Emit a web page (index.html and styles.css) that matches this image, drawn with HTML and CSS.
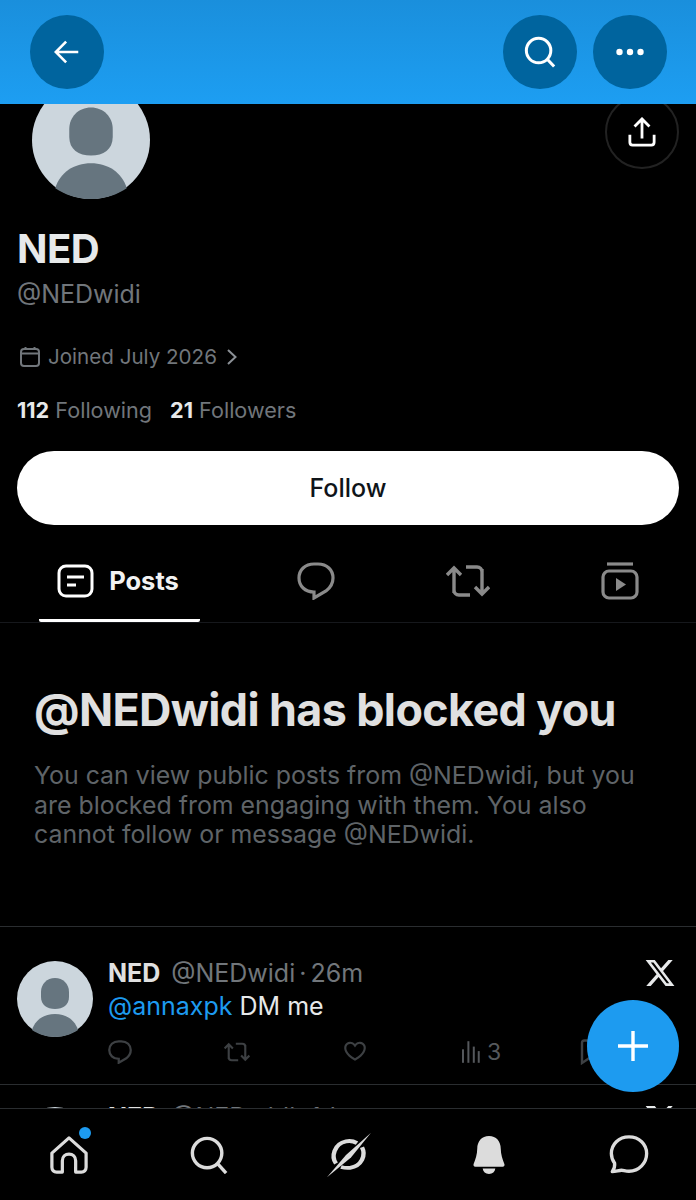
FILE: index.html
```html
<!DOCTYPE html>
<html lang="en">
<head>
  <meta charset="UTF-8" />
  <title>NED (@NEDwidi)</title>
  <link rel="stylesheet" href="styles.css">
</head>
<body>
  <div class="screen">

    <header class="topbar">
      <button class="round-btn">
        <svg width="26" height="26" viewBox="0 0 30 30" fill="none" stroke="#fff" stroke-width="3"><path d="M2 15h26M14 3 2 15l12 12"/></svg>
      </button>
      <div class="topbar-right">
        <button class="round-btn">
          <svg width="32" height="32" viewBox="0 0 34 34" fill="none" stroke="#fff" stroke-width="3.200"><circle cx="15.500" cy="15.500" r="13"/><path d="m24.500 24.500 7.500 8"/></svg>
        </button>
        <button class="round-btn">
          <svg width="28" height="8" viewBox="0 0 28 8" fill="#fff"><circle cx="3.500" cy="4" r="3.200"/><circle cx="14" cy="4" r="3.200"/><circle cx="24.500" cy="4" r="3.200"/></svg>
        </button>
      </div>
    </header>

    <main class="content">
      <section class="profile">
        <div class="profile-top">
          <svg class="avatar avatar-big" viewBox="0 0 76 76"><use href="#default-avatar"/></svg>
          <button class="share-btn">
            <svg width="28" height="30" viewBox="0 0 30 32" fill="none" stroke="#fff" stroke-width="3"><path d="M15 23V3M7 10l8-8 8 8M2 19v8c0 2 1 3 3 3h20c2 0 3-1 3-3v-8"/></svg>
          </button>
        </div>
        <h1 class="name">NED</h1>
        <div class="handle">@NEDwidi</div>
        <div class="joined">
          <svg width="22" height="22" viewBox="0 0 22 22" fill="none" stroke="#71767b" stroke-width="2"><rect x="2" y="3" width="18" height="17" rx="3"/><path d="M2 7.500h18M6.500 1v3M15.500 1v3"/></svg>
          <span>Joined July 2026</span>
          <svg width="12" height="18" viewBox="0 0 12 18" fill="none" stroke="#8b9096" stroke-width="2"><path d="m2 2 7.500 7L2 16"/></svg>
        </div>
        <div class="stats">
          <span><b>112</b> Following</span>
          <span><b>21</b> Followers</span>
        </div>
        <button class="follow-btn">Follow</button>
      </section>

      <nav class="tabs">
        <div class="tab tab-active">
          <svg width="37" height="34" viewBox="0 0 37 34" fill="none" stroke="#fff" stroke-width="3"><rect x="2" y="2" width="33" height="30" rx="7"/><path d="M10 13h17M10 21h9"/></svg>
          <span>Posts</span>
        </div>
        <div class="tab">
          <svg width="38" height="38" viewBox="0 0 38 38" fill="none" stroke="#8a8a8a" stroke-width="3.200"><path d="M17 2h4c9 0 15 6 15 14 0 6-3 10-7 13l-12 7v-6C8 30 2 24 2 16S8 2 17 2Z"/></svg>
        </div>
        <div class="tab">
          <svg width="44" height="36" viewBox="0 0 44 36" fill="none" stroke="#8a8a8a" stroke-width="3.400"><path d="M8 30V5M1 12l7-7 7 7M36 6v25M29 24l7 7 7-7M20 4h11c3 0 5 2 5 5M24 32H13c-3 0-5-2-5-5"/></svg>
        </div>
        <div class="tab">
          <svg width="38" height="38" viewBox="0 0 38 38" fill="none" stroke="#8a8a8a" stroke-width="3.200"><rect x="2" y="9" width="34" height="27" rx="6"/><path d="M6 2h26"/><path d="M15 16v13l10-6.500Z" fill="#8a8a8a" stroke="none"/></svg>
        </div>
      </nav>

      <section class="blocked">
        <h2>@NEDwidi has blocked you</h2>
        <p>You can view public posts from @NEDwidi, but you are blocked from engaging with them. You also cannot follow or message @NEDwidi.</p>
      </section>

      <article class="post">
        <svg class="avatar avatar-small" viewBox="0 0 76 76"><use href="#default-avatar"/></svg>
        <div class="post-body">
          <div class="post-head"><b>NED</b><span class="post-handle">@NEDwidi</span><span class="post-dot">·</span><span>26m</span></div>
          <div class="post-text"><a>@annaxpk</a> DM me</div>
          <div class="post-actions">
            <svg width="24" height="24" viewBox="0 0 38 38" fill="none" stroke="#3d4043" stroke-width="3.600"><path d="M17 2h4c9 0 15 6 15 14 0 6-3 10-7 13l-12 7v-6C8 30 2 24 2 16S8 2 17 2Z"/></svg>
            <svg width="26" height="22" viewBox="0 0 44 36" fill="none" stroke="#3d4043" stroke-width="3.600"><path d="M8 30V5M1 12l7-7 7 7M36 6v25M29 24l7 7 7-7M20 4h11c3 0 5 2 5 5M24 32H13c-3 0-5-2-5-5"/></svg>
            <svg width="26" height="24" viewBox="0 0 24 22" fill="#3d4043"><path d="M16.700 3.500c-1.200-.060-2.700.510-3.900 2.160l-.800 1.090-.800-1.090C10 4 8.500 3.440 7.300 3.500 6 3.570 4.900 4.280 4.400 5.410c-.550 1.120-.630 2.780.470 4.820 1.080 1.970 3.260 4.270 7.130 6.610 3.870-2.340 6.050-4.640 7.130-6.610 1.100-2.040 1.030-3.700.470-4.820-.560-1.130-1.660-1.840-2.900-1.910zm4.180 7.690c-1.350 2.480-4 5.120-8.380 7.670l-.500.300-.500-.300c-4.380-2.550-7.030-5.190-8.380-7.670-1.360-2.500-1.410-4.860-.510-6.670C3.500 2.730 5.250 1.610 7.200 1.510c1.650-.090 3.370.560 4.800 2.010 1.430-1.450 3.150-2.100 4.800-2.010 1.950.100 3.710 1.220 4.600 3.010.900 1.810.850 4.170-.520 6.670z"/></svg>
            <div class="views">
              <svg width="18" height="24" viewBox="0 0 20 24" fill="#55585c"><rect x="0" y="9" width="2.200" height="15"/><rect x="6" y="0" width="2.200" height="24"/><rect x="12" y="6" width="2.200" height="18"/><rect x="17.500" y="11" width="2.200" height="13"/></svg>
              <span>3</span>
            </div>
            <svg width="24" height="26" viewBox="0 0 24 26" fill="none" stroke="#3d4043" stroke-width="2.400"><path d="M3 24V4c0-1.500 1-2.500 2.500-2.500h13C20 1.500 21 2.500 21 4v20l-9-6Z"/></svg>
          </div>
        </div>
        <svg class="x-logo" width="32" height="32" viewBox="0 0 24 24" fill="#e7e9ea"><path d="M18.244 2.250h3.308l-7.227 8.260 8.502 11.240H16.170l-5.214-6.817L4.990 21.750H1.680l7.730-8.835L1.254 2.250H8.080l4.713 6.231zm-1.161 17.520h1.833L7.084 4.126H5.117z"/></svg>
      </article>

      <article class="post post-next">
        <svg class="avatar avatar-small" viewBox="0 0 76 76"><use href="#default-avatar"/></svg>
        <div class="post-body">
          <div class="post-head"><b>NED</b><span class="post-handle">@NEDwidi</span><span class="post-dot">·</span><span>1d</span></div>
        </div>
        <svg class="x-logo" width="32" height="32" viewBox="0 0 24 24" fill="#e7e9ea"><path d="M18.244 2.250h3.308l-7.227 8.260 8.502 11.240H16.170l-5.214-6.817L4.990 21.750H1.680l7.730-8.835L1.254 2.250H8.080l4.713 6.231zm-1.161 17.520h1.833L7.084 4.126H5.117z"/></svg>
      </article>
    </main>

    <button class="fab">
      <svg width="32" height="32" viewBox="0 0 32 32" stroke="#fff" stroke-width="3.400"><path d="M16 1v30M1 16h30"/></svg>
    </button>

    <nav class="bottombar">
      <div class="nav-item">
        <span class="home-dot"></span>
        <svg width="38" height="38" viewBox="0 0 40 40" fill="none" stroke="#dcdcdc" stroke-width="3.400"><path d="M2 18 20 2l18 16v15c0 3-2 5-5 5h-6V26c0-4-3-7-7-7s-7 3-7 7v12H7c-3 0-5-2-5-5Z" stroke-linejoin="round"/></svg>
      </div>
      <div class="nav-item">
        <svg width="38" height="38" viewBox="0 0 40 40" fill="none" stroke="#dcdcdc" stroke-width="3.600"><circle cx="18" cy="18" r="15.500"/><path d="m29 29 9 10"/></svg>
      </div>
      <div class="nav-item">
        <svg width="46" height="46" viewBox="0 0 46 54" preserveAspectRatio="none" fill="none"><path d="M10 37C5 29 8 14 20 11c4-1 8 0 11 2M36 18c4 9 0 22-12 24-3 .500-6 0-9-1" stroke="#dcdcdc" stroke-width="4.400"/><path d="M45 1 20 27 1 53l24-23Z" fill="#dcdcdc"/></svg>
      </div>
      <div class="nav-item">
        <svg width="34" height="38" viewBox="0 0 36 42" fill="#dcdcdc"><path d="M18 0c8 0 13 6 13 14 0 6 2 12 4 17 .500 1.500 0 3-2 3H3c-2 0-2.500-1.500-2-3 2-5 4-11 4-17C5 6 10 0 18 0ZM11 36h14c-.500 4-3 6-7 6s-6.500-2-7-6Z"/></svg>
      </div>
      <div class="nav-item">
        <svg width="40" height="39" viewBox="0 0 42 42" fill="none" stroke="#dcdcdc" stroke-width="3.600"><path d="M21 2c11 0 19 8 19 18s-8 19-19 19c-4 0-6-1-8-1-3 0-6 1.500-10 1.500 2-3 3-6 2.500-9C3 27 2 24 2 20 2 10 10 2 21 2Z" stroke-linejoin="round"/></svg>
      </div>
    </nav>
  </div>

  <svg width="0" height="0" class="defs">
    <defs>
      <symbol id="default-avatar" viewBox="0 0 76 76">
        <circle cx="38" cy="38" r="38" fill="#ccd6dd"/>
        <path d="M38 17c8 0 14 6 14 14v5c0 8-6 12-14 12s-14-4-14-12v-5c0-8 6-14 14-14Z" fill="#66757f"/>
        <path d="M15 69c3-10 12-16 23-16s20 6 23 16c-6 4-14 7-23 7s-17-3-23-7Z" fill="#66757f"/>
      </symbol>
    </defs>
  </svg>
</body>
</html>
```

FILE: styles.css
```css
/* Pagina */
html, body {
  margin: 0;
  background-color: #000;
}

body {
  font-family: 'Inter', 'Liberation Sans', sans-serif;
  color: #e7e9ea;
}

button {
  font-family: inherit;
  border: none;
  padding: 0;
  cursor: pointer;
}

.defs {
  position: absolute;
}

.screen {
  position: relative;
  width: 696px;
  height: 1200px;
  overflow: hidden;
  background-color: #000;
}

/* Barra superior */
.topbar {
  position: relative;
  z-index: 2;
  height: 104px;
  box-sizing: border-box;
  padding: 15px 29px 15px 30px;
  display: flex;
  justify-content: space-between;
  background: linear-gradient(#1a8fdc, #1d9ef2);
}

.topbar-right {
  display: flex;
  gap: 16px;
}

.round-btn {
  width: 74px;
  height: 74px;
  border-radius: 50%;
  background-color: #00649e;
  display: flex;
  align-items: center;
  justify-content: center;
}

/* Perfil */
.content {
  height: 1096px;
  overflow: hidden;
}

.profile {
  padding: 0 17px;
}

.profile-top {
  display: flex;
  justify-content: space-between;
  align-items: flex-start;
  height: 146px;
  margin-top: -23px;
}

.avatar {
  display: block;
  flex-shrink: 0;
}

.avatar-big {
  width: 118px;
  height: 118px;
  margin-left: 15px;
}

.share-btn {
  width: 74px;
  height: 74px;
  margin-top: 14px;
  border-radius: 50%;
  background: transparent;
  border: 2px solid #222;
  display: flex;
  align-items: center;
  justify-content: center;
}

.name {
  margin: 0;
  font-size: 40px;
  line-height: 44px;
  font-weight: 700;
  letter-spacing: -0.5px;
}

.handle {
  margin-top: 1px;
  font-size: 25px;
  line-height: 44px;
  color: #71767b;
}

.joined {
  display: flex;
  align-items: center;
  gap: 7px;
  margin-top: 28px;
  margin-left: 2px;
  font-size: 20.600px;
  line-height: 26px;
  color: #71767b;
}

.joined svg:last-child {
  margin-left: 2px;
}

.stats {
  display: flex;
  gap: 18px;
  margin-top: 27px;
  font-size: 21.600px;
  line-height: 26px;
  color: #71767b;
}

.stats b {
  color: #e7e9ea;
  font-weight: 700;
}

.follow-btn {
  display: block;
  width: 662px;
  height: 74px;
  margin-top: 28px;
  border-radius: 37px;
  background-color: #fff;
  color: #0f1419;
  font-size: 25px;
  font-weight: 500;
}

/* Pestanas */
.tabs {
  display: flex;
  height: 97px;
  margin-top: 1px;
  padding-left: 39px;
  border-bottom: 1px solid #16181c;
  box-sizing: border-box;
}

.tab {
  width: 152px;
  display: flex;
  align-items: center;
  justify-content: center;
  height: 96px;
  padding-top: 14px;
  box-sizing: border-box;
}

.tab-active {
  width: 161px;
  margin-right: 40px;
  gap: 15px;
  border-bottom: 3px solid #fff;
  border-radius: 0 0 2px 2px;
  font-size: 25.500px;
  font-weight: 700;
  color: #f2f2f2;
  padding-top: 16px;
  padding-right: 3px;
}

/* Mensaje de bloqueo */
.blocked {
  padding: 60px 34px 0;
  height: 304px;
  box-sizing: border-box;
  border-bottom: 1px solid #2a2d30;
}

.blocked h2 {
  margin: 0;
  font-size: 44.800px;
  line-height: 54px;
  font-weight: 700;
  letter-spacing: -0.6px;
  color: #e0e0e0;
}

.blocked p {
  margin: 24px 0 0;
  font-size: 24.900px;
  line-height: 29.500px;
  color: #5f6468;
}

/* Publicaciones */
.post {
  display: flex;
  gap: 15px;
  height: 158px;
  padding: 34px 20px 0 17px;
  box-sizing: border-box;
  border-bottom: 1px solid #2a2d30;
}

.avatar-small {
  width: 76px;
  height: 76px;
}

.post-body {
  flex: 1;
  min-width: 0;
}

.post-head {
  font-size: 25px;
  line-height: 24px;
  color: #71767b;
}

.post-head b {
  color: #e0e0e0;
}

.post-handle {
  margin-left: 11px;
}

.post-dot {
  margin: 0 4px;
}

.post-text {
  margin-top: 6px;
  font-size: 25px;
  line-height: 30px;
  color: #e7e9ea;
}

.post-text a {
  color: #1d9bf0;
}

.post-actions {
  display: flex;
  align-items: center;
  gap: 92px;
  margin-top: 17px;
}

.views {
  display: flex;
  align-items: center;
  gap: 7px;
  margin-left: 2px;
  margin-right: -14px;
  font-size: 23px;
  color: #55585c;
}

.x-logo {
  margin-top: -4px;
  flex-shrink: 0;
}

.post-next {
  padding-top: 22px;
}

.post-next .post-head {
  margin-top: -2px;
}

/* Boton flotante */
.fab {
  position: absolute;
  left: 587px;
  top: 1000px;
  width: 92px;
  height: 92px;
  border-radius: 50%;
  background-color: #1d9bf0;
  display: flex;
  align-items: center;
  justify-content: center;
}

/* Barra inferior */
.bottombar {
  position: absolute;
  left: 0;
  right: 0;
  bottom: 0;
  height: 91px;
  display: flex;
  padding: 0 27px 0 29px;
  justify-content: space-between;
  background-color: #000;
  border-top: 1px solid #2a2d30;
}

.nav-item {
  position: relative;
  width: 80px;
  height: 91px;
  display: flex;
  align-items: center;
  justify-content: center;
}

.home-dot {
  position: absolute;
  left: 50px;
  top: 18px;
  width: 12px;
  height: 12px;
  border-radius: 50%;
  background-color: #1d9bf0;
}
```
